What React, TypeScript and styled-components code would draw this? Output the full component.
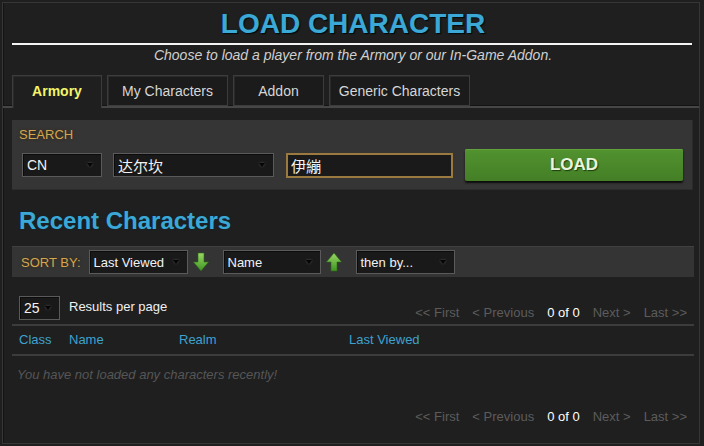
import React from "react";
import styled, { createGlobalStyle } from "styled-components";

const GlobalStyle = createGlobalStyle`
  html, body {
    margin: 0;
    background: #1f1f1f;
    font-family: "Liberation Sans", Arial, "Noto Sans CJK SC", sans-serif;
  }
  * { box-sizing: border-box; }
`;

const tabs = [
  { label: "Armory", width: 90, active: true },
  { label: "My Characters", width: 121 },
  { label: "Addon", width: 91 },
  { label: "Generic Characters", width: 141 },
];

const pager = ["<< First", "< Previous", "0 of 0", "Next >", "Last >>"];

function SortArrow({ dir }: { dir: "up" | "down" }) {
  const id = `grad-${dir}`;
  return (
    <ArrowBox>
      <svg width="16" height="20" viewBox="0 0 16 20">
        <defs>
          <linearGradient id={id} x1="0" y1="0" x2="0" y2="1">
            <stop offset="0" stopColor="#9ad866" />
            <stop offset="1" stopColor="#3d9420" />
          </linearGradient>
        </defs>
        {dir === "down" ? (
          <path d="M5 1 H11 V10 H15.5 L8 19 L0.5 10 H5 Z" fill={`url(#${id})`} stroke="#2c6a14" strokeWidth="0.6" />
        ) : (
          <path d="M8 1 L15.5 10 H11 V19 H5 V10 H0.5 Z" fill={`url(#${id})`} stroke="#2c6a14" strokeWidth="0.6" />
        )}
      </svg>
    </ArrowBox>
  );
}

function Dropdown({ width, size, children }: { width: number; size?: number; children: React.ReactNode }) {
  return (
    <SelectBox $w={width} $size={size ?? 13}>
      <span>{children}</span>
      <Caret />
    </SelectBox>
  );
}

function Pager() {
  return (
    <PagerRow>
      {pager.map((p) => (
        <PagerItem key={p} $current={p === "0 of 0"}>
          {p}
        </PagerItem>
      ))}
    </PagerRow>
  );
}

function App() {
  return (
    <>
      <GlobalStyle />
      <Page>
        <Title>LOAD CHARACTER</Title>
        <Rule />
        <Subtitle>Choose to load a player from the Armory or our In-Game Addon.</Subtitle>

        <TabBar>
          {tabs.map((t) => (
            <Tab key={t.label} $w={t.width} $active={!!t.active}>
              {t.label}
            </Tab>
          ))}
        </TabBar>

        <SearchPanel>
          <GoldLabel>SEARCH</GoldLabel>
          <SearchRow>
            <Dropdown width={80} size={14}>CN</Dropdown>
            <Dropdown width={161} size={15}>达尔坎</Dropdown>
            <NameInput defaultValue="伊繃" />
            <LoadButton>LOAD</LoadButton>
          </SearchRow>
        </SearchPanel>

        <Heading>Recent Characters</Heading>

        <SortBar>
          <GoldLabel>SORT BY:</GoldLabel>
          <SortGroup>
            <Dropdown width={99}>Last Viewed</Dropdown>
            <SortArrow dir="down" />
          </SortGroup>
          <SortGroup>
            <Dropdown width={98}>Name</Dropdown>
            <SortArrow dir="up" />
          </SortGroup>
          <Dropdown width={99}>then by...</Dropdown>
        </SortBar>

        <ResultsRow>
          <PerPage>
            <Dropdown width={41} size={14}>25</Dropdown>
            <PerPageLabel>Results per page</PerPageLabel>
          </PerPage>
          <Pager />
        </ResultsRow>

        <Divider $mt={4} />
        <HeaderRow>
          <HeaderCell>Class</HeaderCell>
          <HeaderCell>Name</HeaderCell>
          <HeaderCell>Realm</HeaderCell>
          <HeaderCell>Last Viewed</HeaderCell>
        </HeaderRow>
        <Divider $mt={0} />
        <EmptyMessage>You have not loaded any characters recently!</EmptyMessage>

        <BottomPager>
          <Pager />
        </BottomPager>
      </Page>
    </>
  );
}

const Page = styled.div`
  margin: 2px 4px 2px 2px;
  height: 442px;
  border: 1px solid #363636;
  box-shadow: inset 1px 0 0 #141414;
  padding: 5px 5px 0 9px;
  overflow: hidden;
`;

const Title = styled.h1`
  margin: 0;
  font-size: 28px;
  line-height: 32px;
  font-weight: bold;
  text-align: center;
  color: #3ba8d6;
  text-shadow: 0 0 2px #0b2a3a, 1px 1px 1px #000;
`;

const Rule = styled.div`
  height: 2px;
  margin: 3px 2px 0 0;
  background: #f4f4f4;
`;

const Subtitle = styled.p`
  margin: 2px 0 0;
  font-size: 14px;
  line-height: 16px;
  font-style: italic;
  text-align: center;
  color: #cfcfcf;
`;

const TabBar = styled.div`
  display: flex;
  gap: 5px;
  margin-top: 12px;
  height: 33px;
  border-bottom: 2px solid #464646;
  box-shadow: 0 -1px 0 #141414 inset;
  margin-left: -9px;
  margin-right: -5px;
  padding-left: 9px;
`;

const Tab = styled.div<{ $w: number; $active: boolean }>`
  width: ${(p) => p.$w}px;
  height: ${(p) => (p.$active ? 33 : 31)}px;
  display: flex;
  align-items: center;
  justify-content: center;
  font-size: 14px;
  color: ${(p) => (p.$active ? "#f4f46a" : "#d6d6d6")};
  font-weight: ${(p) => (p.$active ? "bold" : "normal")};
  background: ${(p) => (p.$active ? "#1f1f1f" : "#1b1b1b")};
  border: 1px solid #3c3c3c;
  border-bottom: ${(p) => (p.$active ? "none" : "1px solid #3c3c3c")};
  box-shadow: inset 1px 1px 0 #2a2a2a;
  position: relative;
  z-index: 1;
  padding-bottom: ${(p) => (p.$active ? 2 : 0)}px;
`;

const SearchPanel = styled.div`
  margin: 12px 1px 0 0;
  height: 70px;
  background: #353535;
  border-right: 1px solid #2a2a2a;
  border-bottom: 1px solid #2c2c2c;
  padding: 7px 10px 0 7px;
`;

const GoldLabel = styled.div`
  font-size: 13px;
  line-height: 15px;
  color: #d4a650;
  text-shadow: 0 0 3px #3a2a10;
  white-space: nowrap;
  margin-right: 4px;
`;

const SearchRow = styled.div`
  display: flex;
  align-items: center;
  margin: 7px 0 0 3px;
  height: 32px;
  gap: 11px;
`;

const SelectBox = styled.div<{ $w: number; $size: number }>`
  width: ${(p) => p.$w}px;
  height: 24px;
  flex: none;
  display: flex;
  align-items: center;
  justify-content: space-between;
  padding: 0 8px 0 4px;
  background: #191919;
  border: 1px solid #5a5a5a;
  box-shadow: inset 1px 1px 0 #0c0c0c;
  color: #f2f2f2;
  font-size: ${(p) => p.$size}px;
  white-space: nowrap;
`;

const Caret = styled.i`
  width: 0;
  height: 0;
  border-left: 3px solid transparent;
  border-right: 3px solid transparent;
  border-top: 4px solid #050505;
  filter: drop-shadow(0 0 1px #555);
`;

const NameInput = styled.input`
  width: 167px;
  height: 25px;
  margin-left: 1px;
  padding: 0 3px;
  background: #1a1a1a;
  border: 2px solid #9a7a3e;
  outline: none;
  color: #f4f4f4;
  font-size: 15px;
  font-family: "Liberation Sans", "Noto Sans CJK SC", sans-serif;
`;

const LoadButton = styled.button`
  width: 218px;
  height: 32px;
  flex: none;
  margin-left: 1px;
  border: none;
  border-radius: 2px;
  background: linear-gradient(#52922f, #447f26);
  box-shadow: 0 2px 2px #0c0c0c, inset 0 1px 0 #62a23c;
  color: #eaf4dc;
  font-family: "Liberation Sans", Arial, sans-serif;
  font-size: 17px;
  font-weight: bold;
  text-shadow: 1px 1px 1px #1d3d0c;
  cursor: pointer;
`;

const Heading = styled.h2`
  margin: 17px 0 0 7px;
  font-size: 24px;
  line-height: 28px;
  font-weight: bold;
  color: #3ba8d6;
  text-shadow: 0 0 2px #0b2a3a;
`;

const SortBar = styled.div`
  margin-top: 11px;
  height: 31px;
  display: flex;
  align-items: center;
  gap: 4px;
  padding-left: 9px;
  background: #343434;
  border-top: 1px solid #404040;
`;

const SortGroup = styled.div`
  display: flex;
  align-items: center;
  gap: 5px;
  margin-right: 10px;
`;

const ArrowBox = styled.span`
  display: flex;
  width: 16px;
  height: 20px;
`;

const ResultsRow = styled.div`
  margin-top: 19px;
  display: flex;
  justify-content: space-between;
  align-items: flex-end;
  padding: 0 7px;
`;

const PerPage = styled.div`
  display: flex;
  align-items: flex-start;
  gap: 9px;
`;

const PerPageLabel = styled.span`
  font-size: 13px;
  line-height: 15px;
  padding-top: 3px;
  color: #f0f0f0;
`;

const PagerRow = styled.div`
  display: flex;
  gap: 13px;
`;

const PagerItem = styled.span<{ $current: boolean }>`
  font-size: 13px;
  line-height: 15px;
  color: ${(p) => (p.$current ? "#ffffff" : "#5c5c5c")};
  white-space: nowrap;
`;

const Divider = styled.div<{ $mt: number }>`
  height: 2px;
  margin-top: ${(p) => p.$mt}px;
  background: #3c3c3c;
`;

const HeaderRow = styled.div`
  display: grid;
  grid-template-columns: 50px 110px 170px 1fr;
  padding: 6px 0 7px 7px;
`;

const HeaderCell = styled.span`
  font-size: 13px;
  line-height: 15px;
  color: #3ea2cf;
`;

const EmptyMessage = styled.div`
  margin: 11px 0 0 5px;
  font-size: 13px;
  line-height: 15px;
  font-style: italic;
  color: #565656;
`;

const BottomPager = styled.div`
  display: flex;
  justify-content: flex-end;
  margin-top: 27px;
  padding-right: 7px;
`;

export default App;
